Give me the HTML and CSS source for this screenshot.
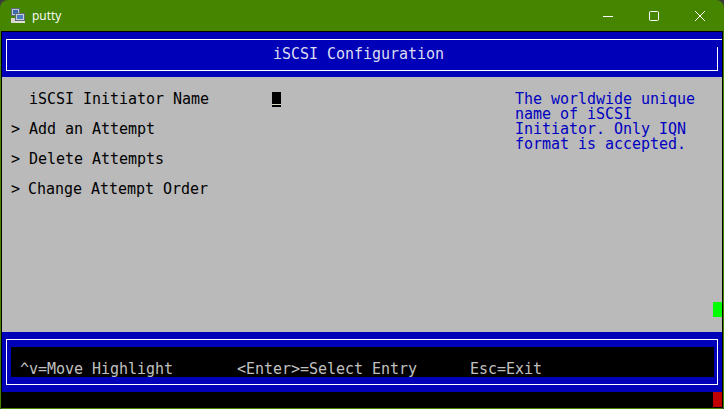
FILE: index.html
```html
<!DOCTYPE html>
<html lang="en">
<head>
<meta charset="utf-8">
<title>putty</title>
<link rel="stylesheet" href="styles.css">
</head>
<body>
<div class="window">
  <header class="titlebar">
    <svg class="app-icon" width="16" height="16" viewBox="0 0 16 16">
      <rect x="1.500" y="0.500" width="8" height="7" fill="#b9c4d0" stroke="#5d6a78"/>
      <rect x="3" y="2" width="5" height="4" fill="#3a68b0"/>
      <rect x="1" y="10" width="5" height="5" fill="#d8d8d0"/>
      <rect x="5.500" y="5.500" width="9" height="7" fill="#c6ced6" stroke="#5d6a78"/>
      <rect x="7" y="7" width="6" height="4" fill="#4a7cc0"/>
      <rect x="6" y="13" width="9" height="2" fill="#e0e0d8"/>
    </svg>
    <span class="app-name">putty</span>
    <div class="controls">
      <svg class="ctl" width="46" height="30" viewBox="0 0 46 30"><path d="M18 15.500h10" stroke="#fff" fill="none"/></svg>
      <svg class="ctl" width="46" height="30" viewBox="0 0 46 30"><rect x="18.500" y="10.500" width="9" height="9" rx="1" stroke="#fff" fill="none"/></svg>
      <svg class="ctl" width="46" height="30" viewBox="0 0 46 30"><path d="M18 10l10 10M28 10l-10 10" stroke="#fff" fill="none"/></svg>
    </div>
  </header>
  <main class="terminal">
    <section class="head-band">
      <div class="head-frame">iSCSI Configuration</div>
    </section>
    <section class="body-area">
      <div class="menu">
        <div class="row"><span class="mark"></span><span class="label">iSCSI Initiator Name</span><span class="cursor"></span></div>
        <div class="row"><span class="mark">&gt;</span><span class="label">Add an Attempt</span></div>
        <div class="row"><span class="mark">&gt;</span><span class="label">Delete Attempts</span></div>
        <div class="row"><span class="mark">&gt;</span><span class="label shift">Change Attempt Order</span></div>
      </div>
      <div class="help">The worldwide unique<br>name of iSCSI<br>Initiator. Only IQN<br>format is accepted.</div>
      <span class="scroll-green"></span>
    </section>
    <section class="foot-band">
      <div class="foot-frame">
        <div class="keys">
          <span class="key-a">^v=Move Highlight</span>
          <span class="key-b">&lt;Enter&gt;=Select Entry</span>
          <span class="key-c">Esc=Exit</span>
        </div>
      </div>
    </section>
    <section class="status"><span class="scroll-red"></span></section>
  </main>
</div>
</body>
</html>
```
FILE: styles.css
```css
html, body {
  margin: 0;
  padding: 0;
  background: #3c3c3c;
}
body {
  width: 724px;
  height: 409px;
  overflow: hidden;
}
.window {
  width: 724px;
  height: 409px;
  box-sizing: border-box;
  background: #458500;
  border-radius: 8px 8px 3px 3px;
  padding: 0 1px 1px 1px;
  display: flex;
  flex-direction: column;
  overflow: hidden;
}
.titlebar {
  height: 31px;
  flex: none;
  display: flex;
  align-items: center;
  padding-left: 9px;
  color: #fff;
  font: 12px "Open Sans", "Liberation Sans", sans-serif;
}
.app-icon { flex: none; }
.app-name { margin-left: 6px; }
.controls {
  margin-left: auto;
  display: flex;
}
.ctl { display: block; }
.terminal {
  flex: 1;
  min-height: 0;
  background: #000;
  padding: 1px 1px 0 1px;
  display: flex;
  flex-direction: column;
  font: 15px/15px "DejaVu Sans Mono", monospace;
  letter-spacing: -0.03px;
}
.head-band {
  height: 45px;
  flex: none;
  box-sizing: border-box;
  background: #0000b8;
  padding: 7px 0 7px 4px;
}
.head-frame {
  position: relative;
  height: 31px;
  box-sizing: border-box;
  border: 1px solid #fff;
  border-right: 0;
  border-bottom: 0;
  color: #dcdcf0;
  padding: 7px 0 0 266px;
}
.head-frame::after {
  content: "";
  position: absolute;
  right: 4px;
  top: 7px;
  bottom: -1px;
  width: 1px;
  background: #fff;
}
.head-frame::before {
  content: "";
  position: absolute;
  left: -1px;
  right: 4px;
  bottom: -1px;
  height: 1px;
  background: #fff;
}
.body-area {
  position: relative;
  flex: none;
  height: 255px;
  background: #bababa;
  display: flex;
  color: #000;
}
.menu {
  width: 513px;
  flex: none;
  padding: 15px 0 0 9px;
  box-sizing: border-box;
  display: flex;
  flex-direction: column;
  gap: 15px;
}
.row {
  display: flex;
  height: 15px;
  align-items: center;
}
.mark { width: 18px; flex: none; }
.shift { margin-left: -1px; }
.cursor {
  width: 9px;
  height: 15px;
  background: linear-gradient(#000 12px, #d8d8c0 12px, #d8d8c0 13px, #000 13px);
  margin-left: 63px;
}
.help {
  padding-top: 15px;
  color: #0000c0;
}
.scroll-green {
  position: absolute;
  right: 0;
  top: 225px;
  width: 9px;
  height: 15px;
  background: #00ff00;
}
.foot-band {
  flex: none;
  height: 60px;
  box-sizing: border-box;
  background: #0000b8;
  padding: 7px 4px 7px 4px;
}
.foot-frame {
  height: 46px;
  box-sizing: border-box;
  border: 1px solid #fff;
  padding: 7px 3px 7px 4px;
}
.keys {
  height: 30px;
  background: #000;
  color: #c0c0c0;
  display: flex;
  align-items: flex-end;
  padding-left: 9px;
  box-sizing: border-box;
}
.key-a { width: 217px; }
.key-b { width: 233px; }
.status {
  position: relative;
  flex: 1;
  background: #000;
}
.scroll-red {
  position: absolute;
  right: 0;
  top: 0;
  width: 9px;
  height: 15px;
  background: #c00000;
}
```
